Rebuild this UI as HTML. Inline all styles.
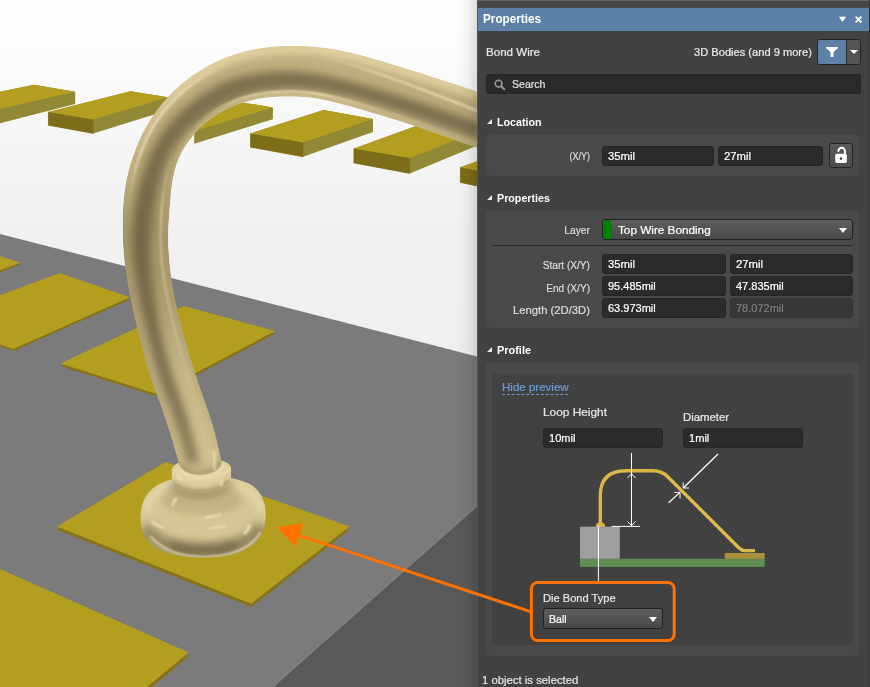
<!DOCTYPE html>
<html>
<head>
<meta charset="utf-8">
<title>Properties - Bond Wire</title>
<style>
  html, body { margin: 0; padding: 0; }
  body { width: 870px; height: 687px; overflow: hidden; position: relative; background: #424242;
         font-family: "Liberation Sans", sans-serif; font-size: 11.5px; color: #e6e6e6; -webkit-text-stroke: 0.22px currentColor; }
  #scene { position: absolute; left: 0; top: 0; display: block; }
  #panel { position: absolute; left: 477px; top: 0; width: 393px; height: 687px; background: #424242; }
  #panel .lborder { position: absolute; left: 0; top: 0; width: 1px; height: 687px; background: #565656; }
  #panel .topstrip { position: absolute; left: 1px; top: 0; width: 392px; height: 8px; background: #484644; border-top: 1px solid #646464; box-sizing: border-box; }
  #panel .rborder { position: absolute; left: 392px; top: 0; width: 1px; height: 687px; background: #373737; }
  .abs { position: absolute; white-space: nowrap; transform-origin: left center; }
  .hdr { left: 1px; top: 8px; width: 391px; height: 23px; background: #5d80a6; }
  .hdr .title { left: 4.8px; top: 3px; font-weight: bold; font-size: 12.5px; color: #ffffff; line-height: 16px; transform: scaleX(0.938); transform-origin: left center; -webkit-text-stroke: 0; }
  .sec { background: #494949; border-radius: 4px; }
  .inner { background: #414141; border-radius: 3px; }
  .h { font-weight: bold; color: #ffffff; font-size: 11.5px; line-height: 14px; transform-origin: left center; -webkit-text-stroke: 0; }
  .tri { width: 0; height: 0; border-left: 5px solid transparent; border-bottom: 5px solid #e8e8e8; }
  .lbl { color: #e8e8e8; line-height: 14px; transform-origin: left center; }
  .rlbl { color: #dcdcdc; line-height: 14px; text-align: right; width: 120px; transform-origin: right center; }
  .t { display: inline-block; transform-origin: left center; }
  .inp { background: #2b2b2b; border: 1px solid #252525; border-radius: 3px; box-sizing: border-box; color: #ffffff; line-height: 18px; padding-left: 5px; }
  .inp.dis { background: #363636; border-color: #333333; color: #7e7e7e; }
  .dd { background: linear-gradient(#5e5e5e, #494949); border: 1px solid #222222; border-radius: 3px; box-sizing: border-box; color: #ffffff; line-height: 18px; }
  .caret { width: 0; height: 0; border-left: 4.5px solid transparent; border-right: 4.5px solid transparent; border-top: 5px solid #ffffff; }
  #overlay { position: absolute; left: 0; top: 0; pointer-events: none; }
</style>
</head>
<body>

<svg id="scene" width="478" height="687" viewBox="0 0 478 687">
<defs>
  <linearGradient id="bg" x1="0" y1="0" x2="0" y2="1">
    <stop offset="0" stop-color="#ffffff"/><stop offset="0.06" stop-color="#fdfdfd"/><stop offset="0.2" stop-color="#f6f6f6"/><stop offset="0.34" stop-color="#f1f1f1"/><stop offset="0.52" stop-color="#efefef"/><stop offset="1" stop-color="#efefef"/>
  </linearGradient>
  <linearGradient id="edgeshade" x1="0" y1="0" x2="1" y2="0">
    <stop offset="0" stop-color="#000" stop-opacity="0"/><stop offset="0.5" stop-color="#000" stop-opacity="0.035"/><stop offset="1" stop-color="#000" stop-opacity="0.14"/>
  </linearGradient>
  <linearGradient id="wbase" gradientUnits="userSpaceOnUse" x1="0" y1="45" x2="0" y2="470">
    <stop offset="0" stop-color="#c4b383"/><stop offset="0.2" stop-color="#b7a779"/><stop offset="0.45" stop-color="#a3956a"/><stop offset="0.8" stop-color="#b8a97c"/><stop offset="1" stop-color="#c8b98a"/>
  </linearGradient>
  <clipPath id="bclip"><path d="M140.3 518 C140.3 503 146 491 159 484 C171 478 186 476 203 476 C222 476 238 478 250 484 C261 490 265.9 502 265.9 516 C265.9 527 262 538 251 546 C239 554.5 222 557.6 203 557.6 C184 557.6 165 554.5 153 546 C144 539 140.3 529 140.3 518 Z"/></clipPath>
  <clipPath id="cclip"><path d="M171.6 470 C171.6 456 231 454 231 468 L231 478 C231 493 171.6 495 171.6 480 Z"/></clipPath>
  <linearGradient id="hlTop" gradientUnits="userSpaceOnUse" x1="0" y1="80" x2="0" y2="240">
    <stop offset="0" stop-color="#e2d1a0" stop-opacity="1"/><stop offset="0.45" stop-color="#e2d1a0" stop-opacity="0.4"/><stop offset="1" stop-color="#e2d1a0" stop-opacity="0"/>
  </linearGradient>
  <linearGradient id="hlLow" gradientUnits="userSpaceOnUse" x1="0" y1="150" x2="0" y2="470">
    <stop offset="0" stop-color="#e8d9aa" stop-opacity="0"/><stop offset="0.2" stop-color="#e8d9aa" stop-opacity="1"/><stop offset="0.6" stop-color="#e8d9aa" stop-opacity="0.6"/><stop offset="0.8" stop-color="#e8d9aa" stop-opacity="0.1"/><stop offset="1" stop-color="#e8d9aa" stop-opacity="0"/>
  </linearGradient>
  <linearGradient id="dk" gradientUnits="userSpaceOnUse" x1="0" y1="300" x2="0" y2="470">
    <stop offset="0" stop-color="#54492f" stop-opacity="0.55"/><stop offset="0.6" stop-color="#54492f" stop-opacity="0.5"/><stop offset="1" stop-color="#54492f" stop-opacity="0.42"/>
  </linearGradient>
  <linearGradient id="hlStreakA" gradientUnits="userSpaceOnUse" x1="122" y1="200" x2="225" y2="62">
    <stop offset="0" stop-color="#f8eecb" stop-opacity="0"/><stop offset="0.3" stop-color="#f8eecb" stop-opacity="0.9"/><stop offset="0.7" stop-color="#f8eecb" stop-opacity="0.9"/><stop offset="1" stop-color="#f8eecb" stop-opacity="0"/>
  </linearGradient>
  <linearGradient id="hlStreakB" gradientUnits="userSpaceOnUse" x1="320" y1="0" x2="480" y2="0">
    <stop offset="0" stop-color="#f8eecb" stop-opacity="0"/><stop offset="0.35" stop-color="#f8eecb" stop-opacity="0.8"/><stop offset="1" stop-color="#f8eecb" stop-opacity="1"/>
  </linearGradient>
  <linearGradient id="hlInner" gradientUnits="userSpaceOnUse" x1="190" y1="0" x2="480" y2="0">
    <stop offset="0" stop-color="#f6e9bf" stop-opacity="0"/><stop offset="0.2" stop-color="#f6e9bf" stop-opacity="0.9"/><stop offset="0.45" stop-color="#f6e9bf" stop-opacity="1"/><stop offset="0.7" stop-color="#f6e9bf" stop-opacity="0.35"/><stop offset="1" stop-color="#f6e9bf" stop-opacity="0.2"/>
  </linearGradient>
  <linearGradient id="hlStreak" gradientUnits="userSpaceOnUse" x1="0" y1="60" x2="0" y2="190">
    <stop offset="0" stop-color="#f8eecb" stop-opacity="1"/><stop offset="0.5" stop-color="#f8eecb" stop-opacity="0.8"/><stop offset="1" stop-color="#f8eecb" stop-opacity="0"/>
  </linearGradient>
  <linearGradient id="hlLow2" gradientUnits="userSpaceOnUse" x1="0" y1="300" x2="0" y2="470">
    <stop offset="0" stop-color="#d8c898" stop-opacity="0"/><stop offset="0.45" stop-color="#d8c898" stop-opacity="0.7"/><stop offset="1" stop-color="#d8c898" stop-opacity="1"/>
  </linearGradient>
  <clipPath id="wclip"><polygon points="178.8,463.6 176.6,455.8 174.3,448.1 172.1,440.3 169.7,432.6 167.3,424.9 164.7,417.2 162.1,409.6 159.3,402.0 156.6,394.4 153.8,386.8 151.2,379.2 148.7,371.5 146.4,363.8 144.2,356.0 142.1,348.2 140.1,340.4 138.1,332.5 136.2,324.7 134.4,316.8 132.6,308.9 130.9,301.0 129.4,293.1 127.9,285.2 126.6,277.2 125.4,269.2 124.4,261.2 123.7,253.2 123.1,245.1 122.8,237.0 122.7,229.0 122.7,220.9 122.8,212.8 123.2,204.8 123.9,196.7 124.9,188.7 126.3,180.8 128.1,172.9 130.2,165.1 132.6,157.4 135.3,149.9 138.3,142.4 141.7,135.1 145.5,127.9 149.6,121.0 154.0,114.3 158.8,107.8 163.9,101.5 169.3,95.6 175.0,89.9 181.0,84.5 187.3,79.5 193.8,74.8 200.6,70.4 207.5,66.3 214.7,62.6 222.0,59.3 229.5,56.3 237.1,53.7 244.9,51.5 252.7,49.7 260.6,48.3 268.6,47.2 276.7,46.5 284.7,46.1 292.8,46.0 300.9,46.1 308.9,46.5 317.0,47.2 325.0,48.1 333.0,49.3 340.9,50.7 348.8,52.4 356.7,54.3 364.5,56.3 372.2,58.5 380.0,60.8 387.7,63.1 395.5,65.5 403.2,67.8 410.9,70.2 418.6,72.6 426.3,75.1 434.0,77.5 441.7,80.0 449.4,82.5 457.1,85.0 464.7,87.6 472.4,90.1 480.0,92.8 480.0,149.0 473.2,146.6 466.3,144.2 459.5,141.8 452.6,139.4 445.8,137.0 438.9,134.6 432.1,132.2 425.2,129.7 418.4,127.3 411.5,125.0 404.6,122.7 397.7,120.5 390.8,118.4 383.8,116.3 376.9,114.2 369.9,112.2 363.0,110.1 356.0,108.0 349.0,106.1 342.0,104.2 335.0,102.4 327.9,100.7 320.8,99.3 313.7,98.1 306.5,97.2 299.3,96.7 292.0,96.5 284.8,96.5 277.5,96.8 270.3,97.3 263.1,98.1 256.0,99.3 248.9,100.9 242.0,103.0 235.2,105.5 228.6,108.4 222.2,111.7 216.0,115.5 210.1,119.6 204.4,124.1 199.1,129.0 194.2,134.3 189.7,139.9 185.5,145.8 181.8,152.0 178.7,158.5 176.2,165.2 174.3,172.1 172.8,179.2 171.7,186.4 170.9,193.6 170.3,200.8 169.7,208.1 169.2,215.3 168.7,222.5 168.4,229.8 168.2,237.0 168.3,244.2 168.7,251.5 169.2,258.7 169.9,265.9 170.7,273.1 171.7,280.3 172.9,287.5 174.2,294.6 175.7,301.7 177.3,308.8 178.9,315.9 180.7,322.9 182.5,329.9 184.4,336.9 186.3,343.9 188.3,350.9 190.4,357.9 192.5,364.8 194.7,371.7 197.0,378.6 199.3,385.5 201.8,392.3 204.2,399.1 206.6,406.0 209.0,412.9 211.2,419.8 213.3,426.7 215.2,433.7 217.0,440.7 218.6,447.8 220.2,454.9 221.6,462.0 221.2,466.0 218.0,470.0 211.0,473.8 201.0,475.4 192.0,474.4 185.0,471.4 180.6,467.6"/></clipPath>
  <filter id="b5" filterUnits="userSpaceOnUse" x="-20" y="-20" width="520" height="730"><feGaussianBlur stdDeviation="5"/></filter>
  <filter id="b4" filterUnits="userSpaceOnUse" x="-20" y="-20" width="520" height="730"><feGaussianBlur stdDeviation="4"/></filter>
  <filter id="b2" filterUnits="userSpaceOnUse" x="-20" y="-20" width="520" height="730"><feGaussianBlur stdDeviation="2"/></filter>
  <filter id="b3" filterUnits="userSpaceOnUse" x="-20" y="-20" width="520" height="730"><feGaussianBlur stdDeviation="3"/></filter>
  <filter id="b1" filterUnits="userSpaceOnUse" x="-20" y="-20" width="520" height="730"><feGaussianBlur stdDeviation="0.8"/></filter>
  <radialGradient id="ballg" cx="0.55" cy="0.3" r="0.75">
    <stop offset="0" stop-color="#e2d3a3"/><stop offset="0.55" stop-color="#d8c897"/><stop offset="0.8" stop-color="#b8a878"/><stop offset="1" stop-color="#8e8058"/>
  </radialGradient>
  <linearGradient id="collarg" x1="0" y1="0" x2="1" y2="0">
    <stop offset="0" stop-color="#bfae7e"/><stop offset="0.35" stop-color="#d9c998"/><stop offset="0.8" stop-color="#d6c694"/><stop offset="1" stop-color="#a89868"/>
  </linearGradient>
</defs>
<rect width="478" height="687" fill="url(#bg)"/>
<!-- floating pads -->
<polygon points="-60.0,104.3 33.9,84.7 75.2,91.8 75.2,103.9 -20.0,128.5 -60.0,118.4" fill="#928936"/><polygon points="-60.0,104.3 -20.0,113.7 -20.0,128.5 -60.0,118.4" fill="#7d6c18" stroke="#7d6c18" stroke-width="0.5"/><polygon points="-60.0,104.3 33.9,84.7 75.2,91.8 -20.0,113.7" fill="#b49e20"/><polygon points="48.4,112.0 130.5,91.2 167.8,97.3 167.8,110.2 93.2,133.4 48.4,125.3" fill="#928936"/><polygon points="48.4,112.0 93.2,119.4 93.2,133.4 48.4,125.3" fill="#7d6c18" stroke="#7d6c18" stroke-width="0.5"/><polygon points="48.4,112.0 130.5,91.2 167.8,97.3 93.2,119.4" fill="#b49e20"/><polygon points="194.2,131.0 227.0,100.0 272.9,107.4 272.9,119.2 194.2,143.8" fill="#928936"/><polygon points="148.0,123.6 227.0,100.0 272.9,107.4 194.2,131.0" fill="#b49e20"/><polygon points="250.5,133.5 323.5,110.0 373.0,118.9 373.0,132.1 303.0,156.8 250.5,147.2" fill="#928936"/><polygon points="250.5,133.5 303.0,142.4 303.0,156.8 250.5,147.2" fill="#7d6c18" stroke="#7d6c18" stroke-width="0.5"/><polygon points="250.5,133.5 323.5,110.0 373.0,118.9 303.0,142.4" fill="#b49e20"/><polygon points="353.9,148.5 430.0,121.0 480.0,130.2 480.0,144.3 409.8,173.4 353.9,163.0" fill="#928936"/><polygon points="353.9,148.5 409.8,158.1 409.8,173.4 353.9,163.0" fill="#7d6c18" stroke="#7d6c18" stroke-width="0.5"/><polygon points="353.9,148.5 430.0,121.0 480.0,130.2 409.8,158.1" fill="#b49e20"/><polygon points="460.4,167.3 520.0,146.0 580.0,160.0 580.0,174.7 515.0,194.0 460.4,182.5" fill="#928936"/><polygon points="460.4,167.3 515.0,178.0 515.0,194.0 460.4,182.5" fill="#7d6c18" stroke="#7d6c18" stroke-width="0.5"/><polygon points="460.4,167.3 520.0,146.0 580.0,160.0 515.0,178.0" fill="#b49e20"/>
<!-- board -->
<polygon points="-10,231.4 478,356.8 478,505.4 273,687 -10,687" fill="#7b7b7b"/>
<polygon points="478,505.4 273,687 478,687" fill="#595959"/>
<polygon points="-40.0,246.0 20.7,264.6 -40.0,287.0" fill="#86731a"/><polygon points="-40.0,244.0 20.7,262.6 -40.0,285.0" fill="#b49e20"/><polygon points="59.4,275.1 129.9,299.4 13.3,351.1 -60.0,325.2 -60.0,320.2" fill="#86731a"/><polygon points="59.4,272.9 129.9,297.2 13.3,348.9 -60.0,323.0 -60.0,318.0" fill="#b49e20"/><polygon points="183.9,308.6 275.1,333.7 156.2,396.3 60.3,366.1" fill="#86731a"/><polygon points="183.9,306.0 275.1,331.1 156.2,393.7 60.3,363.5" fill="#b49e20"/><polygon points="165.5,465.5 349.6,529.8 251.2,607.1 57.0,529.8" fill="#86731a"/><polygon points="165.5,462.1 349.6,526.4 251.2,603.7 57.0,526.4" fill="#b49e20"/><polygon points="-120.0,520.0 188.7,656.6 100.0,730.0 -120.0,730.0" fill="#86731a"/><polygon points="-120.0,516.0 188.7,652.6 100.0,726.0 -120.0,726.0" fill="#b49e20"/>
<!-- ball -->
<g clip-path="url(#bclip)">
  <path d="M140.3 518 C140.3 503 146 491 159 484 C171 478 186 476 203 476 C222 476 238 478 250 484 C261 490 265.9 502 265.9 516 C265.9 527 262 538 251 546 C239 554.5 222 557.6 203 557.6 C184 557.6 165 554.5 153 546 C144 539 140.3 529 140.3 518 Z" fill="#d7c796"/>
  <!-- lower dark belly -->
  <path d="M143 528 C158 547 182 552 203 552 C228 552 250 546 263 526" stroke="#62573a" stroke-width="15" fill="none" opacity="0.6" filter="url(#b5)"/>
  <path d="M170 545 C185 551 220 551 238 544" stroke="#5a4f34" stroke-width="9" fill="none" opacity="0.55" filter="url(#b4)"/>
  <!-- outer-top lighter shoulder ring -->
  <path d="M146 512 C150 488 178 478 203 478 C232 478 258 490 261 512" stroke="#e6d7a8" stroke-width="9" fill="none" opacity="0.8" filter="url(#b3)"/>
  <!-- centre depression around collar -->
  <ellipse cx="202" cy="500" rx="40" ry="15" fill="#b5a576" opacity="0.6" filter="url(#b3)"/>
  <path d="M170 484 C180 499 222 499 233 482" stroke="#7a6d49" stroke-width="5" fill="none" opacity="0.55" filter="url(#b3)"/>
  <!-- rim light at very bottom -->
  <path d="M150 536 C165 553 185 557 203 557 C228 557 250 550 261 532" stroke="#efe3bb" stroke-width="2.2" fill="none" opacity="0.75" filter="url(#b1)"/>
  <!-- spec highlights -->
  <path d="M151.5 521.5 C155 524.5 159 526.5 164 528" stroke="#fbf3d6" stroke-width="1.8" fill="none" opacity="0.85" filter="url(#b1)"/>
  <path d="M205 517.5 C210 517 216 516 221 514.5" stroke="#fbf3d6" stroke-width="1.6" fill="none" opacity="0.85" filter="url(#b1)"/>
  <path d="M209 528.5 C214 528 220 527 226 525.5" stroke="#f7edcb" stroke-width="1.5" fill="none" opacity="0.7" filter="url(#b1)"/>
  <path d="M244 534 C247 531 249 528 250 525" stroke="#fbf3d6" stroke-width="2.6" fill="none" opacity="0.8" filter="url(#b1)"/>
  <path d="M172 506 C173 503 175 500 177 498" stroke="#fbf3d6" stroke-width="2.2" fill="none" opacity="0.85" filter="url(#b1)"/>
</g>
<!-- collar -->
<g clip-path="url(#cclip)">
  <path d="M171.6 470 C171.6 456 231 454 231 468 L231 478 C231 493 171.6 495 171.6 480 Z" fill="#dfd0a0"/>
  <path d="M170 479 C180 495 222 495 232 477 L232 498 L170 498 Z" fill="#6f6342" opacity="0.8" filter="url(#b3)"/>
  <path d="M174 470 C182 482 220 482 229 468" stroke="#eadbad" stroke-width="3" fill="none" opacity="0.8" filter="url(#b1)"/>
  <path d="M221.5 480 V487" stroke="#fbf3d6" stroke-width="1.6" fill="none" opacity="0.8" filter="url(#b1)"/>
  <path d="M176 476 C178 478 180 479 182 480" stroke="#fbf3d6" stroke-width="1.6" fill="none" opacity="0.8" filter="url(#b1)"/>
</g>
<!-- wire -->
<g clip-path="url(#wclip)">
  <polygon points="178.8,463.6 176.6,455.8 174.3,448.1 172.1,440.3 169.7,432.6 167.3,424.9 164.7,417.2 162.1,409.6 159.3,402.0 156.6,394.4 153.8,386.8 151.2,379.2 148.7,371.5 146.4,363.8 144.2,356.0 142.1,348.2 140.1,340.4 138.1,332.5 136.2,324.7 134.4,316.8 132.6,308.9 130.9,301.0 129.4,293.1 127.9,285.2 126.6,277.2 125.4,269.2 124.4,261.2 123.7,253.2 123.1,245.1 122.8,237.0 122.7,229.0 122.7,220.9 122.8,212.8 123.2,204.8 123.9,196.7 124.9,188.7 126.3,180.8 128.1,172.9 130.2,165.1 132.6,157.4 135.3,149.9 138.3,142.4 141.7,135.1 145.5,127.9 149.6,121.0 154.0,114.3 158.8,107.8 163.9,101.5 169.3,95.6 175.0,89.9 181.0,84.5 187.3,79.5 193.8,74.8 200.6,70.4 207.5,66.3 214.7,62.6 222.0,59.3 229.5,56.3 237.1,53.7 244.9,51.5 252.7,49.7 260.6,48.3 268.6,47.2 276.7,46.5 284.7,46.1 292.8,46.0 300.9,46.1 308.9,46.5 317.0,47.2 325.0,48.1 333.0,49.3 340.9,50.7 348.8,52.4 356.7,54.3 364.5,56.3 372.2,58.5 380.0,60.8 387.7,63.1 395.5,65.5 403.2,67.8 410.9,70.2 418.6,72.6 426.3,75.1 434.0,77.5 441.7,80.0 449.4,82.5 457.1,85.0 464.7,87.6 472.4,90.1 480.0,92.8 480.0,149.0 473.2,146.6 466.3,144.2 459.5,141.8 452.6,139.4 445.8,137.0 438.9,134.6 432.1,132.2 425.2,129.7 418.4,127.3 411.5,125.0 404.6,122.7 397.7,120.5 390.8,118.4 383.8,116.3 376.9,114.2 369.9,112.2 363.0,110.1 356.0,108.0 349.0,106.1 342.0,104.2 335.0,102.4 327.9,100.7 320.8,99.3 313.7,98.1 306.5,97.2 299.3,96.7 292.0,96.5 284.8,96.5 277.5,96.8 270.3,97.3 263.1,98.1 256.0,99.3 248.9,100.9 242.0,103.0 235.2,105.5 228.6,108.4 222.2,111.7 216.0,115.5 210.1,119.6 204.4,124.1 199.1,129.0 194.2,134.3 189.7,139.9 185.5,145.8 181.8,152.0 178.7,158.5 176.2,165.2 174.3,172.1 172.8,179.2 171.7,186.4 170.9,193.6 170.3,200.8 169.7,208.1 169.2,215.3 168.7,222.5 168.4,229.8 168.2,237.0 168.3,244.2 168.7,251.5 169.2,258.7 169.9,265.9 170.7,273.1 171.7,280.3 172.9,287.5 174.2,294.6 175.7,301.7 177.3,308.8 178.9,315.9 180.7,322.9 182.5,329.9 184.4,336.9 186.3,343.9 188.3,350.9 190.4,357.9 192.5,364.8 194.7,371.7 197.0,378.6 199.3,385.5 201.8,392.3 204.2,399.1 206.6,406.0 209.0,412.9 211.2,419.8 213.3,426.7 215.2,433.7 217.0,440.7 218.6,447.8 220.2,454.9 221.6,462.0 221.2,466.0 218.0,470.0 211.0,473.8 201.0,475.4 192.0,474.4 185.0,471.4 180.6,467.6" fill="url(#wbase)"/>
  <polyline points="180.5,463.5 178.3,455.8 176.1,448.1 173.9,440.3 171.5,432.6 169.1,425.0 166.6,417.3 164.0,409.7 161.2,402.2 158.5,394.6 155.8,387.0 153.1,379.4 150.6,371.8 148.3,364.1 146.1,356.3 144.0,348.6 142.0,340.8 140.1,333.0 138.2,325.2 136.3,317.3 134.5,309.5 132.9,301.6 131.3,293.7 129.8,285.8 128.5,277.9 127.3,269.9 126.3,262.0 125.6,254.0 125.0,245.9 124.7,237.9 124.5,229.9 124.5,221.8 124.6,213.8 125.1,205.8 125.7,197.8 126.7,189.8 128.1,181.9 129.8,174.1 131.8,166.3 134.1,158.6 136.8,151.0 139.8,143.6 143.1,136.3 146.8,129.2 150.8,122.2 155.2,115.5 160.0,109.1 165.1,102.8 170.4,96.9 176.1,91.2 182.1,85.9 188.4,80.9 194.9,76.2 201.7,71.9 208.6,67.9 215.8,64.3 223.1,61.0 230.6,58.0 238.2,55.5 245.9,53.3 253.7,51.6 261.6,50.2 269.6,49.2 277.6,48.5 285.6,48.1 293.6,48.1 301.7,48.2 309.7,48.7 317.7,49.4 325.7,50.3 333.6,51.5 341.5,53.0 349.4,54.7 357.2,56.6 365.0,58.7 372.7,60.8 380.4,63.1 388.1,65.4 395.8,67.7 403.5,70.1 411.2,72.5 418.9,74.9 426.5,77.4 434.2,79.8 441.8,82.3 449.5,84.8 457.1,87.3 464.8,89.8 472.4,92.4 480.0,95.0" stroke="url(#hlTop)" stroke-width="12" fill="none" opacity="0.9" filter="url(#b3)"/>
  <polygon points="187.4,463.3 185.3,455.6 183.2,448.0 181.0,440.4 178.8,432.8 176.5,425.3 174.0,417.7 171.5,410.3 168.8,402.8 166.1,395.4 163.4,387.9 160.8,380.4 158.4,372.9 156.0,365.4 153.8,357.8 151.8,350.1 149.7,342.5 147.8,334.8 145.8,327.1 143.9,319.4 142.1,311.7 140.3,303.9 138.7,296.2 137.1,288.4 135.7,280.5 134.5,272.7 133.4,264.8 132.6,257.0 132.2,249.2 132.0,241.3 132.3,233.7 132.8,226.1 133.5,218.5 134.5,211.0 135.6,203.5 137.1,196.0 138.8,188.7 140.8,181.3 143.0,174.1 145.4,166.9 148.1,159.9 151.0,152.9 154.3,146.0 157.9,139.4 162.0,132.9 166.5,126.8 171.3,120.9 176.6,115.2 182.1,109.9 187.9,104.9 193.7,99.9 199.8,95.2 206.2,90.9 212.7,86.9 219.6,83.4 226.7,80.5 234.0,77.9 241.5,75.8 249.0,74.0 256.6,72.7 264.3,71.7 272.1,71.1 279.8,70.8 287.6,70.8 295.4,71.1 303.1,71.7 310.8,72.7 318.5,73.9 326.1,75.3 333.7,77.0 341.3,78.8 348.8,80.8 356.3,82.8 363.7,84.8 371.0,87.0 378.4,89.1 385.7,91.4 393.0,93.6 400.3,95.9 407.6,98.3 414.9,100.7 422.1,103.1 429.4,105.6 436.6,108.1 443.9,110.6 451.1,113.0 458.3,115.5 465.6,118.1 472.8,120.6 480.0,123.1 480.0,140.0 473.0,137.5 466.0,135.0 459.1,132.6 452.1,130.1 445.1,127.7 438.1,125.2 431.1,122.7 424.1,120.3 417.1,117.8 410.1,115.4 403.1,113.1 396.0,110.8 388.9,108.6 381.8,106.5 374.7,104.3 367.6,102.2 360.5,100.1 353.4,98.1 346.3,96.5 339.2,94.9 332.1,93.5 324.9,92.2 317.7,91.1 310.5,90.3 303.3,89.8 296.0,89.5 288.8,89.6 281.5,90.0 274.3,90.6 267.0,91.4 259.9,92.6 252.8,94.1 245.8,96.1 238.9,98.4 232.2,101.2 225.6,104.3 219.0,107.6 212.7,111.4 206.7,115.5 200.9,120.0 195.1,124.5 189.6,129.4 184.5,134.6 179.8,140.1 175.5,145.9 171.7,152.0 168.4,158.3 165.5,164.9 163.1,171.6 161.1,178.5 159.3,185.5 157.7,192.5 156.2,199.6 154.8,206.7 153.6,213.8 152.5,221.0 151.7,228.2 151.0,235.4 150.7,242.7 150.6,250.0 150.9,257.5 151.4,264.9 151.9,272.3 152.5,279.7 153.3,287.0 154.3,294.3 155.3,301.6 156.5,308.9 157.7,316.2 159.0,323.5 160.4,330.8 162.2,338.2 164.2,345.6 166.2,353.0 168.3,360.4 170.5,367.7 172.9,375.0 175.3,382.3 177.8,389.6 180.4,396.8 183.0,404.0 185.5,411.2 188.0,418.5 190.3,425.8 192.5,433.1 194.5,440.5 196.5,447.9 198.4,455.4 200.2,462.8" fill="url(#dk)" filter="url(#b4)"/>
  <polyline points="192.5,463.1 190.5,455.5 188.5,448.0 186.4,440.5 184.3,432.9 182.0,425.5 179.6,418.0 177.1,410.6 174.5,403.3 171.8,395.9 169.2,388.6 166.6,381.2 164.2,373.8 161.8,366.3 159.6,358.8 157.5,351.3 155.5,343.7 153.6,336.2 151.7,328.6 150.0,321.1 148.5,313.5 147.0,306.0 145.6,298.4 144.3,290.8 143.1,283.2 142.1,275.6 141.2,268.0 140.6,260.3 140.2,252.7 139.9,245.0 140.1,237.5 140.5,230.0 141.2,222.6 142.1,215.2 143.2,207.9 144.6,200.5 146.2,193.3 148.0,186.1 149.9,178.9 152.1,171.9 154.5,164.9 157.2,158.0 160.3,151.3 163.8,144.8 167.8,138.5 172.2,132.5 177.0,126.7 182.2,121.3 187.7,116.2 193.5,111.4 199.3,106.6 205.4,102.2 211.7,98.1 218.3,94.4 225.1,91.1 232.0,88.2 239.1,85.7 246.3,83.7 253.7,82.0 261.1,80.7 268.5,79.7 276.1,79.1 283.6,78.7 291.1,78.6 298.7,78.9 306.2,79.4 313.7,80.3 321.1,81.4 328.6,82.8 336.0,84.3 343.3,86.0 350.7,87.8 358.0,89.7 365.2,91.8 372.5,93.9 379.8,96.1 387.0,98.3 394.2,100.5 401.4,102.8 408.6,105.1 415.8,107.5 422.9,110.0 430.1,112.5 437.2,114.9 444.4,117.4 451.5,119.9 458.6,122.4 465.8,124.9 472.9,127.4 480.0,129.9" stroke="url(#dk)" stroke-width="4" fill="none" opacity="0.35" filter="url(#b3)"/>
  <polyline points="221.2,462.0 219.7,454.9 218.2,447.8 216.5,440.7 214.8,433.7 212.9,426.7 210.7,419.7 208.5,412.8 206.1,405.9 203.7,399.1 201.3,392.3 198.9,385.4 196.5,378.5 194.2,371.6 192.0,364.7 189.9,357.8 187.8,350.8 185.8,343.8 183.9,336.8 182.0,329.8 180.2,322.8 178.5,315.7 176.8,308.6 175.2,301.5 173.7,294.4 172.4,287.3 171.3,280.1 170.3,272.9 169.4,265.7 168.7,258.5 168.2,251.2 167.8,244.0 167.8,236.8 168.0,229.5 168.3,222.3 168.7,215.0 169.3,207.8 169.9,200.5 170.5,193.3 171.3,186.1 172.4,178.9 173.9,171.9 175.9,164.9 178.4,158.2 181.5,151.7 185.2,145.5 189.3,139.6 193.9,133.9 198.8,128.7 204.2,123.8 209.8,119.2 215.7,115.1 221.9,111.4 228.3,108.0 234.9,105.1 241.7,102.6 248.7,100.5 255.7,98.9 262.8,97.7 270.0,96.8 277.3,96.3 284.5,96.0 291.8,96.0 299.0,96.2 306.3,96.7 313.5,97.6 320.6,98.8 327.7,100.2 334.8,101.9 341.8,103.6 348.8,105.5 355.8,107.5 362.8,109.5 369.8,111.6 376.7,113.7 383.7,115.8 390.7,117.8 397.6,120.0 404.5,122.2 411.4,124.4 418.3,126.8 425.2,129.2 432.0,131.6 438.9,134.0 445.7,136.4 452.6,138.8 459.4,141.2 466.3,143.6 473.1,146.0 480.0,148.4" stroke="url(#hlTop)" stroke-width="5" fill="none" opacity="0.7" filter="url(#b2)"/>
  <polyline points="210.5,462.4 208.8,455.1 207.1,447.9 205.3,440.6 203.4,433.4 201.3,426.2 199.1,419.1 196.8,412.0 194.3,405.0 191.8,397.9 189.3,390.9 186.8,383.8 184.4,376.8 182.1,369.7 179.9,362.5 177.8,355.4 175.8,348.2 173.8,341.0 171.9,333.7 170.0,326.5 168.2,319.3 166.5,312.0 164.8,304.7 163.3,297.4 161.8,290.1 160.5,282.7 159.4,275.3 158.5,267.9 157.7,260.5 157.1,253.1" stroke="url(#hlLow2)" stroke-width="15" fill="none" opacity="0.7" filter="url(#b4)"/>
  <polyline points="214.3,462.3 212.8,455.0 211.1,447.8 209.4,440.7 207.5,433.5 205.5,426.4 203.3,419.3 201.0,412.3 198.6,405.3 196.1,398.3 193.6,391.4 191.2,384.4 188.8,377.4 186.5,370.4 184.3,363.3 182.2,356.2 180.1,349.1 178.1,342.0 176.2,334.9 174.3,327.7 172.5,320.5 170.8,313.3 169.1,306.1 167.6,298.9 166.1,291.6 164.8,284.4 163.7,277.1 162.7,269.7 161.9,262.4 161.3,255.0 160.8,247.6 160.5,240.3 160.5,232.9 160.7,225.5 161.1,218.1 161.6,210.8 162.4,203.4 163.1,196.1 164.0,188.8 165.1,181.5 166.4,174.2 168.2,167.1 170.4,160.1 173.1,153.3 176.3,146.7 180.2,140.4 184.4,134.4 189.0,128.7" stroke="url(#hlLow)" stroke-width="1.6" fill="none" opacity="0.8" filter="url(#b1)"/>
  <polyline points="169.1,176.3 170.7,169.2 172.8,162.2 175.4,155.4 178.6,148.9 182.4,142.6 186.6,136.7 191.2,131.0 196.2,125.7 201.5,120.7 207.2,116.1 213.1,111.9 219.3,108.0 225.8,104.6 232.4,101.6 239.3,98.9 246.2,96.8 253.3,95.0 260.5,93.7 267.8,92.7 275.0,92.0 282.4,91.7 289.7,91.5 297.0,91.7 304.3,92.1 311.6,92.9 318.8,94.0 326.0,95.3 333.2,96.9 340.3,98.6 347.4,100.4 354.5,102.3 361.5,104.3 368.6,106.4 375.6,108.5 382.7,110.5 389.7,112.7 396.7,114.8 403.7,117.0 410.7,119.3 417.6,121.6 424.6,124.0 431.5,126.5 438.4,128.9 445.3,131.3 452.3,133.7 459.2,136.1 466.1,138.5 473.1,140.9 480.0,143.4" stroke="url(#hlInner)" stroke-width="1.8" fill="none" opacity="0.95" filter="url(#b1)"/>
  <polyline points="129.1,208.0 129.8,200.1 130.8,192.2 132.1,184.4 133.7,176.7 135.7,169.0 137.9,161.4 140.4,153.9 143.3,146.5 146.5,139.2 150.1,132.2 154.1,125.3 158.4,118.7 163.1,112.3 168.2,106.2 173.5,100.4 179.2,94.8 185.2,89.6 191.5,84.7 198.0,80.2 204.7,76.0 211.7,72.2 218.8,68.7" stroke="url(#hlStreakA)" stroke-width="1.7" fill="none" opacity="0.9" filter="url(#b1)"/>
  <polyline points="304.5,55.7 312.5,56.7 320.5,57.9 328.4,59.4 336.3,61.1 344.2,63.0 351.9,65.2 359.7,67.5 367.4,70.0 375.0,72.6 382.7,75.2 390.3,77.9 397.9,80.5 405.4,83.3 413.0,86.1 420.5,88.9 428.0,91.7 435.5,94.6 442.9,97.4 450.4,100.3 457.8,103.1 465.2,106.0 472.6,108.9 480.0,111.9" stroke="url(#hlStreakB)" stroke-width="1.8" fill="none" opacity="0.9" filter="url(#b1)"/>
  <!-- end of wire inside collar: darker contact shadow -->
  <path d="M176 462 C186 480 216 480 224 460" stroke="#6b5f3f" stroke-width="5" fill="none" opacity="0.45" filter="url(#b3)"/>
  <path d="M214.4 451 V470" stroke="#f8eecb" stroke-width="2" fill="none" opacity="0.75" filter="url(#b1)"/>
</g>
<path d="M178.6 467.5 C184 479.5 217 479.5 222.6 465.5" stroke="#efe2b8" stroke-width="2.2" fill="none" opacity="0.85" filter="url(#b1)"/>
<!-- shadow cast by the panel edge -->
<rect x="456" y="0" width="22" height="687" fill="url(#edgeshade)"/>
</svg>

<div id="panel">
  <div class="lborder"></div>
  <div class="topstrip"></div>
  <div class="rborder"></div>

  <!-- header -->
  <div class="abs hdr">
    <div class="abs title">Properties</div>
    <svg class="abs" style="left:360px; top:8px;" width="9" height="7" viewBox="0 0 9 7"><polygon points="0.9,0.8 8.1,0.8 4.5,6" fill="#ffffff"/></svg>
    <svg class="abs" style="left:376.3px; top:7.3px;" width="9" height="9" viewBox="0 0 9 9"><path d="M1.6 1.6 L7.4 7.4 M7.4 1.6 L1.6 7.4" stroke="#ffffff" stroke-width="1.9" fill="none"/></svg>
  </div>

  <!-- object type row -->
  <div class="abs lbl" style="transform:scaleX(1.006); left:9px; top:45px;">Bond Wire</div>
  <div class="abs lbl" style="transform:scaleX(0.966); left:217px; top:45px;">3D Bodies (and 9 more)</div>
  <div class="abs" style="left:340px; top:39px; width:44px; height:26px; box-sizing:border-box; border:1px solid #222222; border-radius:3px; background:#555555; overflow:hidden;">
    <div class="abs" style="left:0; top:0; width:28px; height:24px; background:#5d80a6;"></div>
    <div class="abs" style="left:28px; top:0; width:1px; height:24px; background:#2e2e2e;"></div>
    <svg class="abs" style="left:8px; top:7px;" width="12" height="10" viewBox="0 0 12 10"><path d="M0 0 H12 V1 L7.4 5.3 V10 H4.6 V5.3 L0 1 Z" fill="#ffffff"/></svg>
    <div class="abs caret" style="left:32px; top:10px; border-left-width:4px; border-right-width:4px; border-top-width:4.6px;"></div>
  </div>

  <!-- search -->
  <div class="abs inp" style="left:9px; top:74px; width:375px; height:20px; background:#2a2a2a;">
    <svg class="abs" style="left:7px; top:4px;" width="12" height="12" viewBox="0 0 12 12"><circle cx="4.6" cy="4.6" r="3.4" stroke="#9a9a9a" stroke-width="1.6" fill="none"/><path d="M7.2 7.2 L10.2 10.2" stroke="#9a9a9a" stroke-width="2" stroke-linecap="round"/></svg>
    <div class="abs" style="transform:scaleX(0.919); left:25px; top:0; color:#e2e2e2;">Search</div>
  </div>

  <!-- Location -->
  <div class="abs tri" style="left:10px; top:119px;"></div>
  <div class="abs h" style="transform:scaleX(0.927); left:19.5px; top:115px;">Location</div>
  <div class="abs sec" style="left:9px; top:135px; width:373px; height:41px;"></div>
  <div class="abs rlbl" style="transform:scaleX(0.779); left:-7px; top:149px;">(X/Y)</div>
  <div class="abs inp" style="left:125px; top:146px; width:112px; height:20px;"><span class="t" style="transform:scaleX(0.982)">35mil</span></div>
  <div class="abs inp" style="left:241px; top:146px; width:105px; height:20px;"><span class="t" style="transform:scaleX(0.982)">27mil</span></div>
  <div class="abs dd" style="left:352px; top:143px; width:24px; height:25px; background:linear-gradient(#5a5a5a,#4c4c4c);">
    <svg class="abs" style="left:4px; top:2px;" width="14" height="18" viewBox="0 0 14 18"><path d="M4.4 5 A3.25 3.25 0 0 1 10.9 5.2 V9" stroke="#ffffff" stroke-width="2" fill="none" stroke-linecap="round"/><rect x="1.2" y="7.7" width="11.7" height="9.3" rx="1.8" fill="#ffffff"/><circle cx="7" cy="12.6" r="1.3" fill="#4a4a4a"/></svg>
  </div>

  <!-- Properties -->
  <div class="abs tri" style="left:10px; top:195px;"></div>
  <div class="abs h" style="transform:scaleX(0.932); left:19.5px; top:191px;">Properties</div>
  <div class="abs sec" style="left:9px; top:211px; width:373px; height:117px;"></div>
  <div class="abs rlbl" style="transform:scaleX(0.893); left:-7px; top:223px;">Layer</div>
  <div class="abs dd" style="left:125px; top:219px; width:251px; height:21px; overflow:hidden;">
    <div class="abs" style="left:0; top:0; width:8px; height:19px; background:#008200;"></div>
    <div class="abs" style="transform:scaleX(1.021); left:15px; top:1px; line-height:19px;">Top Wire Bonding</div>
    <div class="abs caret" style="left:236px; top:8px;"></div>
  </div>
  <div class="abs" style="left:15px; top:245px; width:361px; height:1px; background:#2a2a2a;"></div>
  <div class="abs rlbl" style="transform:scaleX(0.881); left:-7px; top:258px;">Start (X/Y)</div>
  <div class="abs inp" style="left:125px; top:254px; width:124px; height:20px;"><span class="t" style="transform:scaleX(0.982)">35mil</span></div>
  <div class="abs inp" style="left:253px; top:254px; width:123px; height:20px;"><span class="t" style="transform:scaleX(0.982)">27mil</span></div>
  <div class="abs rlbl" style="transform:scaleX(0.878); left:-7px; top:281px;">End (X/Y)</div>
  <div class="abs inp" style="left:125px; top:276px; width:124px; height:20px;"><span class="t" style="transform:scaleX(0.956)">95.485mil</span></div>
  <div class="abs inp" style="left:253px; top:276px; width:123px; height:20px;"><span class="t" style="transform:scaleX(0.956)">47.835mil</span></div>
  <div class="abs rlbl" style="transform:scaleX(0.979); left:-7px; top:303px;">Length (2D/3D)</div>
  <div class="abs inp" style="left:125px; top:298px; width:124px; height:20px;"><span class="t" style="transform:scaleX(0.956)">63.973mil</span></div>
  <div class="abs inp dis" style="left:253px; top:298px; width:123px; height:20px;"><span class="t" style="transform:scaleX(0.956)">78.072mil</span></div>

  <!-- Profile -->
  <div class="abs tri" style="left:10px; top:347px;"></div>
  <div class="abs h" style="transform:scaleX(0.95); left:19.5px; top:343px;">Profile</div>
  <div class="abs sec" style="left:9px; top:363px; width:373px; height:293px;"></div>
  <div class="abs inner" style="left:15px; top:374px; width:361px; height:271px;"></div>
  <div class="abs" style="transform:scaleX(1.003); left:25px; top:380px; color:#6d9bd2; line-height:14px; border-bottom:1px dashed #6d9bd2; padding-bottom:0px;">Hide preview</div>
  <div class="abs lbl" style="transform:scaleX(1.032); left:66px; top:405px;">Loop Height</div>
  <div class="abs inp" style="left:66px; top:428px; width:120px; height:20px;"><span class="t" style="transform:scaleX(0.964)">10mil</span></div>
  <div class="abs lbl" style="transform:scaleX(0.986); left:206px; top:410px;">Diameter</div>
  <div class="abs inp" style="left:206px; top:428px; width:120px; height:20px;"><span class="t" style="transform:scaleX(0.964)">1mil</span></div>

  <!-- preview drawing -->
  <svg class="abs" style="left:93px; top:445px;" width="210" height="140" viewBox="570 445 210 140">
    <rect x="580" y="558.8" width="184.7" height="8.1" fill="#5f8f50"/>
    <rect x="580" y="526.7" width="39.8" height="32.1" fill="#9f9f9f"/>
    <rect x="724.7" y="553" width="40" height="5.8" fill="#a98f3e"/>
    <path d="M600.3 527 V496 Q600.3 470.8 626 470.8 H653 Q662 470.8 668 477 L739 548 Q741.5 550.6 745 550.6 H755" stroke="#ddb649" stroke-width="3.4" fill="none" stroke-linejoin="round"/>
    <path d="M595.6 526.8 A4.8 4.8 0 0 1 605.2 526.8 Z" fill="#ddb649"/>
    <g stroke="#ffffff" stroke-width="1" fill="none">
      <path d="M631.5 453 V526"/>
      <path d="M627.5 478 L631.5 473.8 L635.5 478"/>
      <path d="M627.5 521.5 L631.5 525.7 L635.5 521.5"/>
      <path d="M611.7 526.4 H640"/>
      <path d="M598.4 526 V581"/>
      <path d="M718 454 L683.2 488" stroke-width="1.25"/>
      <path d="M683.2 482.4 V488 H689"/>
      <path d="M668.6 502.8 L680 492.4" stroke-width="1.25"/>
      <path d="M674.2 492.4 H680 V498.6"/>
    </g>
  </svg>

  <!-- Die bond type -->
  <div class="abs lbl" style="transform:scaleX(0.965); left:66px; top:591px;">Die Bond Type</div>
  <div class="abs dd" style="left:66px; top:608px; width:120px; height:21px;">
    <div class="abs" style="transform:scaleX(0.922); left:5px; top:1px; line-height:19px;">Ball</div>
    <div class="abs caret" style="left:105px; top:8px;"></div>
  </div>

  <div class="abs lbl" style="transform:scaleX(0.985); left:5px; top:673px; color:#e4e4e4;">1 object is selected</div>
</div>

<!-- call-out overlay -->
<svg id="overlay" width="870" height="687" viewBox="0 0 870 687">
  <rect x="531.4" y="582.4" width="142.8" height="58.2" rx="6.5" ry="6.5" fill="none" stroke="#ff7100" stroke-width="3"/>
  <path d="M530.5 611.6 L297 534.6" stroke="#ff7100" stroke-width="3" fill="none"/>
  <polygon points="276.6,527.3 303.2,523.3 295.5,546.6" fill="#ff7100"/>
</svg>
</body>
</html>
